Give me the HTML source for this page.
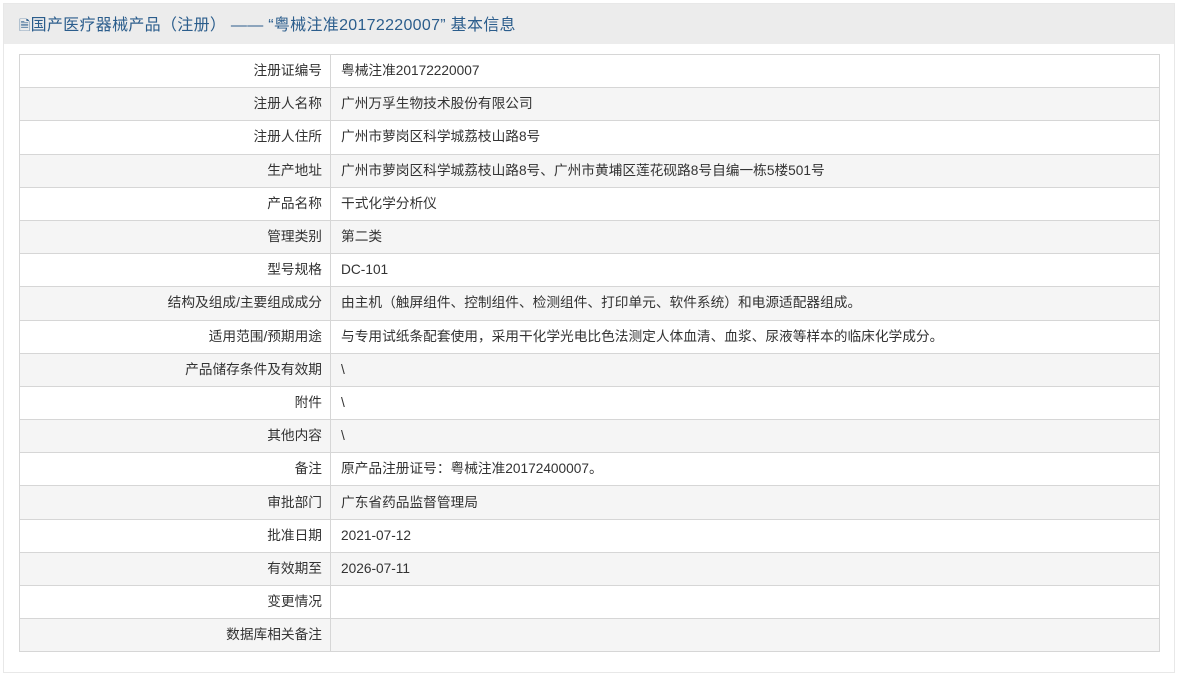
<!DOCTYPE html>
<html><head><meta charset="utf-8"><style>
body{margin:0;background:#fff;font-family:"Liberation Sans","Noto Sans CJK SC",sans-serif;width:1200px;height:665px;overflow:hidden}
.panel{position:absolute;left:3px;top:3px;width:1172px;height:670px;background:#fff;border:1px solid #e8e8e8;box-sizing:border-box}
.hd{height:40px;background:#ececec;color:#2b5d8c;font-size:16px;line-height:42px;padding-left:15px;letter-spacing:0.3px}
table{position:absolute;left:15px;top:50px;width:1141px;border-collapse:collapse;font-size:13.7px;color:#333}
td{border:1px solid #d6d6d6;height:33.2px;padding:0 10px;box-sizing:border-box;line-height:20px;vertical-align:middle}
td span{display:inline-block;height:20px;line-height:20px;vertical-align:middle}
td.l{width:311px;text-align:right;padding-right:8px}
tr:nth-child(even) td{background:#f5f5f5}
</style></head><body>
<div class="panel">
<div class="hd"><span style="font-size:14px">&#x1F5CE;</span>国产医疗器械产品（注册） —— “粤械注准20172220007” 基本信息</div>
<table>
<tr><td class="l">注册证编号</td><td>粤械注准20172220007</td></tr>
<tr><td class="l">注册人名称</td><td>广州万孚生物技术股份有限公司</td></tr>
<tr><td class="l">注册人住所</td><td>广州市萝岗区科学城荔枝山路8号</td></tr>
<tr><td class="l">生产地址</td><td>广州市萝岗区科学城荔枝山路8号、广州市黄埔区莲花砚路8号自编一栋5楼501号</td></tr>
<tr><td class="l">产品名称</td><td>干式化学分析仪</td></tr>
<tr><td class="l">管理类别</td><td>第二类</td></tr>
<tr><td class="l">型号规格</td><td><span>DC-101</span></td></tr>
<tr><td class="l">结构及组成/主要组成成分</td><td>由主机（触屏组件、控制组件、检测组件、打印单元、软件系统）和电源适配器组成。</td></tr>
<tr><td class="l">适用范围/预期用途</td><td>与专用试纸条配套使用，采用干化学光电比色法测定人体血清、血浆、尿液等样本的临床化学成分。</td></tr>
<tr><td class="l">产品储存条件及有效期</td><td><span>\</span></td></tr>
<tr><td class="l">附件</td><td><span>\</span></td></tr>
<tr><td class="l">其他内容</td><td><span>\</span></td></tr>
<tr><td class="l">备注</td><td>原产品注册证号：粤械注准20172400007。</td></tr>
<tr><td class="l">审批部门</td><td>广东省药品监督管理局</td></tr>
<tr><td class="l">批准日期</td><td><span>2021-07-12</span></td></tr>
<tr><td class="l">有效期至</td><td><span>2026-07-11</span></td></tr>
<tr><td class="l">变更情况</td><td></td></tr>
<tr><td class="l">数据库相关备注</td><td></td></tr>
</table>
</div>
</body></html>
